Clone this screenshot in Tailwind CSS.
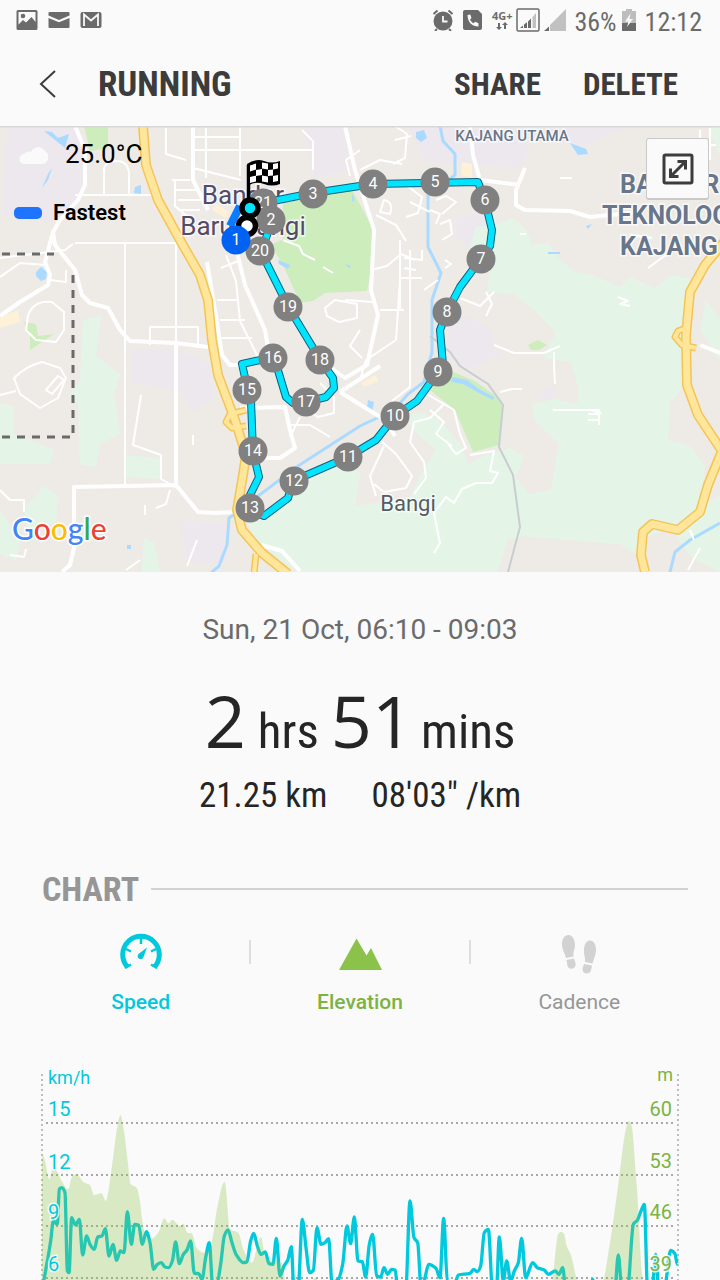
<!DOCTYPE html>
<html lang="en">
<head>
    <meta charset="UTF-8">
    <meta name="viewport" content="width=device-width, initial-scale=1.0">
    <title>Running - Workout details</title>
    <script src="https://cdn.jsdelivr.net/npm/@tailwindcss/browser@4"></script>
</head>
<body class="h-screen overflow-hidden flex flex-col bg-[#fafafa] font-[Roboto,sans-serif] text-[#252525]">
    <!-- Status bar -->
    <div class="h-10 shrink-0 pl-4 pr-[18px] flex items-center justify-between text-[#6b6b6b]">
        <div class="flex items-center gap-[10px]">
            <svg class="w-[22px] h-5" viewBox="0 0 22 20" fill="currentColor">
                <path fill-rule="evenodd" d="M2 0h18a1.500 1.500 0 0 1 1.500 1.500v17A1.500 1.500 0 0 1 20 20H2a1.500 1.500 0 0 1-1.500-1.500v-17A1.500 1.500 0 0 1 2 0zM2.500 2v12.500L7 10l3 2.500L15.500 7 19.500 12V2z"/>
                <circle cx="7" cy="6" r="2.300"/>
            </svg>
            <svg class="w-[22px] h-5" viewBox="0 0 22 20" fill="currentColor">
                <path d="M1.500 2h19a1 1 0 0 1 1 1v2.500L11 10 .5 5.500V3a1 1 0 0 1 1-1zM.5 8 11 12.300 21.500 8v9a1 1 0 0 1-1 1h-19a1 1 0 0 1-1-1z"/>
            </svg>
            <svg class="w-[22px] h-5" viewBox="0 0 22 20" fill="none">
                <rect x=".5" y="2" width="21" height="16" rx="2" fill="currentColor"/>
                <path d="M4 16V4.500l7 6 7-6V16" stroke="#fafafa" stroke-width="1.800"/>
            </svg>
        </div>
        <div class="flex items-center">
            <svg class="w-[22px] h-[22px]" viewBox="0 0 22 22">
                <circle cx="11" cy="12" r="9.500" fill="currentColor"/>
                <path d="M11 7v5.500h4.500" fill="none" stroke="#fafafa" stroke-width="1.800"/>
                <path d="M1.500 5 5.500 1.500M20.500 5l-4-3.500M5 20l-2 2M17 20l2 2" stroke="currentColor" stroke-width="2"/>
            </svg>
            <svg class="ml-[9px] w-5 h-[22px]" viewBox="0 0 20 22">
                <path d="M2 1h13l4 4v14a2 2 0 0 1-2 2H2a2 2 0 0 1-2-2V3a2 2 0 0 1 2-2z" fill="currentColor"/>
                <path d="M4.500 6c0 7 4.500 11.500 11 11.500v-3.200l-3.300-1.500-1.700 1.500C8.700 13.300 7.700 12 7 10.500l1.500-1.600L7.300 5.500z" fill="#fafafa"/>
            </svg>
            <div class="ml-[9px] flex flex-col items-center">
                <span class="font-[Open_Sans,sans-serif] text-[11px] leading-3 font-bold">4G+</span>
                <svg class="w-3 h-2" viewBox="0 0 12 8" fill="currentColor"><path d="M3 8 0 5h2V1h2v4h2zM9 0l3 3h-2v4H8V3H6z"/></svg>
            </div>
            <svg class="ml-1 w-6 h-6" viewBox="0 0 24 24" fill="currentColor">
                <rect x="1" y="1" width="22" height="22" rx="1.500" fill="none" stroke="currentColor" stroke-width="1.500"/>
                <path d="M4 20l3-2.500V20zM8 16.500l3-2.300V20H8zM12 13.500l3-3V20h-3z"/>
                <path d="M16.500 9 20 5v15h-3.500z" opacity=".4"/>
            </svg>
            <svg class="ml-1 w-[22px] h-[22px]" viewBox="0 0 22 22" fill="currentColor"><path d="M22 0v22H6V16z" opacity=".4"/><path d="M5 17.500V22H0z"/></svg>
            <span class="ml-2 pt-[3px] font-[Roboto_Condensed,Liberation_Sans_Narrow,Roboto,sans-serif] text-[26px] leading-8">36%</span>
            <svg class="ml-1 w-4 h-[22px]" viewBox="0 0 16 22">
                <path d="M5 0h6v2h4v20H1V2h4z" fill="#bdbdbd"/><path d="M1 14h14v8H1z" fill="currentColor"/>
                <path d="M9.500 4.500 4 12.500h3.500L6 18l6-8H8.500z" fill="#fafafa"/>
            </svg>
            <span class="ml-2 pt-[3px] font-[Roboto_Condensed,Liberation_Sans_Narrow,Roboto,sans-serif] text-[26px] leading-8">12:12</span>
        </div>
    </div>

    <!-- App bar -->
    <header class="h-[86px] shrink-0 pt-1 pl-8 pr-[42px] flex items-center font-[Roboto_Condensed,Liberation_Sans_Narrow,Roboto,sans-serif] font-bold text-[#3c3c3c]">
        <button type="button" aria-label="Back" class="w-8 h-8 flex items-center justify-center">
            <svg class="w-8 h-8" viewBox="0 0 32 32" fill="none" stroke="currentColor" stroke-width="2"><path d="M23 2 9 15l14 13"/></svg>
        </button>
        <h1 class="ml-[34px] text-[35px] leading-10">RUNNING</h1>
        <div class="ml-auto flex gap-[42px] text-[31px] leading-10">
            <button type="button">SHARE</button>
            <button type="button">DELETE</button>
        </div>
    </header>

    <!-- Route map -->
    <section class="relative shrink-0" aria-label="Route">
        <svg class="block w-full" viewBox="0 126 720 446" fill="none">
            <rect y="126" width="720" height="446" fill="#eeebe7"/>
            <!-- built-up areas -->
            <g fill="#ece8ee">
                <path d="M8 126h66l12 24v36l-30 36L2 214z"/>
                <path d="M300 126h42l8 44-36 8-4-26zM408 126h84l38 20-8 22-96-6z"/>
                <path d="M456 218l26-6 6 26-10 20-22-20zM448 310l40 16 12 30-34 14-18-12z"/>
                <path d="M130 350h50l30 14 4 34-20 14-14-20-48-10zM555 385l-3 20-18-10zM180 520l50 4-4 40-40-2zM500 126h130l-50 22z"/>
            </g>
            <!-- forest and farmland -->
            <g fill="#e4f5e8">
                <path d="M495 225l18-7 14 13 5 14 16-2 12 17 15 12 17 3 28 12 10-10 25 11 17-13 18 4 2 66-4 37-18 20-2 38 22 6 15 20-5 38-25 22-35 13v18l-20-13-100-8-12 38H300l-40-30-15-25 25-7 30-27 20-15 30-2 10 4-5 34 55-8 12-26 14-22-20-18-12-14 14-6 20 6 22 26 8 20 20-10 22-6 14 8-8 22 13 16 22-4 8-46-25-24-2-16 22-5 23 5 2-14-8-28-27-4 12-26-22-22-20-16-27-2 3-25-20-20 6-20z"/>
                <path d="M83 320l18-4-5 40 24 18-6 20 6 40-20 10-4 24-16-4-2-60-10-8 12-14zM126 455l34 4 2 20-36-2zM0 404l14 2v28l40 16-4 14-50 0zM24 508l20-22 14 10-2 26-30 8zM0 510l20 30-4 20-16-6zM144 538l10 4 6 30h-18z"/>
                <path d="M664 520l56-24v76l-28-14zM706 300l14 20v40l-20-30zM708 126h12v30z"/>
            </g>
            <path d="M551 545l-43-7-10 34h140v-14l-20-12z" fill="#eeebe7"/>
            <g fill="#cdedbd">
                <path d="M283 203l69-13 23 42-2 28-6 31-42 2-12 8-13 2-17-38-12-20 12-6z"/>
                <path d="M437 365l38 16 25 18 3 12-4 34-26 7-18-42-25-20zM84 126h24v22l-18 3zM24 322l12 2 2 12 16-2-12 8-12 8 0-14zM528 345l10-5 9 5-8 5h-8z"/>
            </g>
            <g fill="#fdf1d8"><path d="M216 204l14 8-4 6-14-8zM462 162l10 2 0 14-11-3zM0 318l18-8 2 12-20 6zM362 383l14-8 2 6-14 6z"/></g>
            <!-- water -->
            <g fill="#aadaff">
                <path d="M44 131l8 1 6 6 11-4-4 14-10-8zM52 168l-4 12-6 8 6-14zM36 272l5-5 6 5-1 7-5 2-5-5zM135 187l6-2v9l-7-1zM416 132l8-2 3 8-6 4-5-4zM570 143l16 6 2 5-10 1zM278 260l12 5-2 4-9-5zM345 264l6 2-2 2zM352 194l3 6-3 2zM453 377l14 3 12 9 15 8-1 3-14-7-16-9-12-2zM548 252h12v2h-12zM586 226l6-2-4 5zM368 400l6 2-2 10-5-4zM127 545h4v4h-4z"/>
            </g>
            <g stroke="#aadaff" stroke-width="3" stroke-linejoin="round">
                <path d="M440 126l3 15 12 13v21l-27 20v52l13 26-9 27v52l-8 30-16 12-14 16-34 16-62 40-49 37-20 15-2 27-8 21-8 7M720 523l-30 17-15 12-5 20"/>
            </g>
            <!-- minor roads -->
            <g stroke="#fff" stroke-width="2" stroke-linejoin="round">
                <path d="M75 195h80M75 243h101v100M125 243v244M104 195v-24q0-10 12-10t13 12v22M73 244l-8 6-65 8M0 277l20-14 26 2M50 280l16 2v-12M172 180h18M175 180v26l14 12M166 128v26l20 6M193 137h48M193 150h120M313 170v-30M193 168l48 12"/>
                <path d="M174 190h22M178 200h24M180 210h20M206 128l0 50M240 126v50M221 268l20-8M217 300h20M220 320h25M222 338h30M226 255l10 26 4 40 18 36M28 316q5-16 24-14l12 10v18l-8 12-20-2-10-10zM150 345v-18h48v20"/>
                <path d="M14 378q12-12 28-16l18 6 6 10-8 20-18 10-20-14zM46 390l12-14 6 4-12 14zM0 395l16-4M141 395l-8 50 28 10v24l18 10M193 435v10M0 490l10 10 14 0v12M145 505v10M170 490l-4 14-10 4M140 560l-14 10M197 540l-10 26M10 555l14 2 2-8"/>
                <path d="M395 126l12 8-2 24-12 6M395 140l16-4M360 150l-14 10 4 16M360 170l20-10 22 4M384 200q10 2 6 14l-10-2zM376 215l20 10 10 16M371 270l16-4 14-12 14 6M345 300l28 2M325 308l10-8 22 4v14l-18 4-12-6zM380 310h24M400 240v70M410 250v50M404 258l18 2v-10M400 278h22M404 268l12 2M360 330l-10 16 12 12"/>
                <path d="M406 185l16 12-4 16-12 4M410 202l20 10M436 200l10-4 10 6-14 12M430 210l10 4-4 10M440 224l10-4 2 14-10 6M445 260l6 4-6 4M410 287v100l-18 14M424 290l14-10M460 298l20 8 14-14M486 292l6 12-6 12"/>
                <path d="M302 130l10 10M310 360l14 8M300 405l18 12 16-4 0-16-14-14M290 425l20 0 20 12M300 417l-10 20M360 380l6-20 30-20 4-60"/>
                <path d="M420 390l24 14 10 6 6 24 6 14-10 6-8-10M430 410l14 12-8 12 16 12M444 404l-14 14-16 4-4 20 14 20 2 16-12 16M380 440l16 14 16 22-6 12-22 4-10-8M384 446l-14 30 6 20M470 455l24-4-4 20 8 2-6 10-16 0-14 6-8 14-8-6-12 16 6 30-6 10"/>
                <path d="M500 392l12-3h10M554 352v14l1 18M553 410h38l10 3M588 410h12M588 414h12M588 420h12M599 410v15M494 345l20 8 30 0 16-7M520 234l6 0M618 297l10 4-8 3M620 304l10 2M690 530l4 10M700 548l-12 22"/>
                <path d="M648 268l30-22M700 130v30M710 128v32M690 145h26M560 178h12M630 235l22 3"/>
            </g>
            <!-- main roads -->
            <g stroke="#fff" stroke-width="4" stroke-linejoin="round">
                <path d="M75 126l10 24v35l-7 15-18 20-7 12 2 13 20 25 7 25 8 8 18 5 12 22 10 11 46 2 32 4M53 232l-8 30 5 13-2 10-28 17-20 14M176 344v141l22 27 17 1 20-1M176 485l-102 2v61l-4 17-8 7M193 126v54l15 30M345 126l10 44 19 60-3 60 7 25-11 50-22 13-25-18M207 262l8 48 7 45 8 10h15M237 252l8 33 20 45 5 30M240 408l45-1 5 23 5 18-15 10h-18M340 392l45 28 10 16M340 392l40-26M470 126l3 29 7 25 40 5M525 168l-9 22v15l9 5 45 1 20 6 50-5M262 545l20 6 18 20M700 345l20 8"/>
            </g>
            <path d="M430 336l20 16 10 14 28 18 15 21-4 42 14 28 7 52-12 45" stroke="#c8cdd1" stroke-width="2"/>
            <path d="M283 240l16 6 4 8 12 6M323 267l10 6" stroke="#fff" stroke-width="2"/>
            <!-- highways -->
            <g stroke-linejoin="round">
                <g stroke="#f4c454" stroke-width="10">
                    <path d="M143 126l3 39 12 35 22 40 20 35 8 25 4 40 6 35 17 45 11 35-3 20-6 35 5 20 20 23 26 21"/>
                    <path d="M724 242l-19 23-15 27-4 43 1 50 11 30 24 36-14 34-8 27-22 18-26-6-9 8-2 23 4 17"/>
                    <path d="M254 574l2-20M0 126l2-6M246 410l-16 4-4 8 6 6 14-2M686 328l-8 3-3 6 7 8 14 3" stroke-width="7"/>
                </g>
                <path d="M254 574l2-20M246 410l-16 4-4 8 6 6 14-2M686 328l-8 3-3 6 7 8 14 3" stroke="#ffe69b" stroke-width="4"/>
                <g stroke="#ffe69b" stroke-width="7">
                    <path d="M143 126l3 39 12 35 22 40 20 35 8 25 4 40 6 35 17 45 11 35-3 20-6 35 5 20 20 23 26 21"/>
                    <path d="M724 242l-19 23-15 27-4 43 1 50 11 30 24 36-14 34-8 27-22 18-26-6-9 8-2 23 4 17"/>
                </g>
            </g>
            <path d="M2 254h52M73 275v162H0" stroke="#6a6a6a" stroke-width="3" stroke-dasharray="8 7"/>
            <path d="M0 126.500h720" stroke="#d5d8d8" stroke-width="2"/>

            <!-- place names -->
            <g font-family="Roboto, sans-serif" stroke="#fff" stroke-opacity=".7" stroke-width="3" paint-order="stroke" text-anchor="middle">
                <g font-size="26" fill="#544b68">
                    <text x="243" y="204">Bandar</text>
                    <text x="243" y="235">Baru Bangi</text>
                </g>
                <text x="408" y="511" font-size="22" fill="#555c63">Bangi</text>
                <text x="512" y="141" font-size="15" font-weight="500" fill="#67768a">KAJANG UTAMA</text>
                <g font-size="25" font-weight="700" fill="#67768a" text-anchor="start">
                    <text x="620" y="193">BANDAR</text>
                    <text x="602" y="224">TEKNOLOGI</text>
                    <text x="620" y="255">KAJANG</text>
                </g>
            </g>
            <text x="12" y="540" font-family="Lato, sans-serif" font-size="30" font-weight="500" stroke="#fff" stroke-width="3" paint-order="stroke"><tspan fill="#4285f4">G</tspan><tspan fill="#ea4335">o</tspan><tspan fill="#fbbc05">o</tspan><tspan fill="#4285f4">g</tspan><tspan fill="#34a853">l</tspan><tspan fill="#ea4335">e</tspan></text>

            <!-- route -->
            <g stroke-linejoin="round">
                <path d="M263 203l50-10 60-9 105-2 7 19 7 29-2 16-10 14-20 27-13 25-7 18 3 35-5 7-21 29-22 15-19 24-28 17-55 24-5 17-24 18-14-6v-15l9-18-6-25-2-51-3-10-6-27 32-7 12 40 7 6 13-1 20-5 8-9-1-10-12-17-32-53-28-56 11-31" stroke="#0b5f7c" stroke-width="8"/>
                <path d="M263 203l50-10 60-9 105-2 7 19 7 29-2 16-10 14-20 27-13 25-7 18 3 35-5 7-21 29-22 15-19 24-28 17-55 24-5 17-24 18-14-6v-15l9-18-6-25-2-51-3-10-6-27 32-7 12 40 7 6 13-1 20-5 8-9-1-10-12-17-32-53-28-56 11-31" stroke="#00e5ff" stroke-width="6"/>
                <path d="M240 206l-10 20" stroke="#0a7cff" stroke-width="8"/>
            </g>
            <g id="markers" font-family="Roboto, sans-serif" font-size="16" fill="#fff" text-anchor="middle"></g>
            <!-- start, finish and fastest km -->
            <circle cx="247" cy="226" r="8.500" fill="#fff" stroke="#000" stroke-width="5.500"/>
            <circle cx="250" cy="208" r="8" fill="#00e5ff" stroke="#000" stroke-width="5.500"/>
            <path d="M248.500 202v-37" stroke="#000" stroke-width="3.500"/>
            <path d="M247 164q9-6 17-3 8 3 16 0v23q-8 3-16 0-8-3-15 1z" fill="#000"/>
            <path d="M250 165.500l6-2v6l-6 2zM262 162.500l6 1v6l-6-1zM273 164l5-1v5.500l-5 1zM256 170l6-1v6l-6 1zM268 170l5-.5v6l-5 .5zM250 177l6-1.500v6l-6 1.500zM262 175.500l6 1v6l-6-1zM273 176l5-1v6l-5 1z" fill="#fff"/>
            <circle cx="236" cy="240" r="14.500" fill="#0061f2"/>
            <text x="236" y="245" font-family="Roboto, sans-serif" font-size="16" fill="#fff" text-anchor="middle">1</text>
        </svg>

        <div class="absolute top-3 left-4 flex items-center text-black">
            <svg class="w-8 h-8" viewBox="0 0 32 32"><path d="M9 26a5 5 0 0 1-1-10 6 6 0 0 1 7-2A8 8 0 0 1 29 13a7 7 0 0 1-3 13z" fill="#fafafa"/></svg>
            <span class="ml-[17px] text-[26px] leading-8">25.0°C</span>
        </div>
        <div class="absolute top-[73px] left-[14px] flex items-center text-black">
            <span class="w-7 h-3 rounded-[5px] bg-[#1f74ff]"></span>
            <span class="ml-[11px] text-[22px] leading-7 font-semibold">Fastest</span>
        </div>
        <button type="button" aria-label="Expand map" class="absolute top-3 right-[11px] w-[63px] h-[62px] rounded-[3px] border border-[#c9c9c9] border-b-2 bg-[#fafafa] text-[#3c3c3c] flex items-center justify-center">
            <svg class="w-8 h-8" viewBox="0 0 32 32" fill="none" stroke="currentColor" stroke-width="3">
                <rect x="2" y="2" width="28" height="28" rx="1.500"/>
                <path d="M9 23 23 9M15.500 8.500H23.500v8M8.500 15.500v8h8"/>
            </svg>
        </button>
    </section>

    <!-- Summary -->
    <section class="shrink-0 pt-10 flex flex-col items-center">
        <p class="text-[28px] leading-9 text-[#6b6b6b]">Sun, 21 Oct, 06:10 - 09:03</p>
        <p class="mt-8 flex items-baseline font-[Roboto_Condensed,Liberation_Sans_Narrow,Roboto,sans-serif] text-[49px] leading-[80px]">
            <span class="font-[Open_Sans,sans-serif] text-[72px] font-medium">2</span>
            <span class="ml-3">hrs</span>
            <span class="ml-3 font-[Open_Sans,sans-serif] text-[72px] font-medium">51</span>
            <span class="ml-2">mins</span>
        </p>
        <p class="mt-1 flex gap-11 font-[Roboto_Condensed,Liberation_Sans_Narrow,Roboto,sans-serif] text-[35px] leading-10">
            <span>21.25 km</span>
            <span>08'03" /km</span>
        </p>
    </section>

    <!-- Chart -->
    <section class="shrink-0 mt-[50px]">
        <div class="pl-[42px] pr-8 flex items-center gap-3">
            <h2 class="font-[Roboto_Condensed,Liberation_Sans_Narrow,Roboto,sans-serif] font-bold text-[34px] leading-[46px] text-[#969696]">CHART</h2>
            <div class="flex-1 h-[2px] bg-[#d2d2d2]"></div>
        </div>
        <div class="mt-5 px-8 flex text-[21px] leading-7">
            <button type="button" class="flex-1 flex flex-col items-center gap-3 font-medium text-[#00c9dd]">
                <svg class="w-11 h-11" viewBox="0 0 44 44" fill="none" stroke="currentColor">
                    <path d="M8.500 35A18.300 18.300 0 1 1 35.500 35" stroke-width="5"/>
                    <path d="M22 6v6M7 17l5 2.500M37 17l-5 2.500M6 36l6-3.500M38 36l-6-3.500" stroke-width="2.500"/>
                    <path d="M28 15.500 24.500 25a3 3 0 1 1-5-3z" fill="currentColor" stroke="none"/>
                </svg>
                Speed
            </button>
            <div class="mt-2 w-[2px] h-6 bg-[#dedede]"></div>
            <button type="button" class="flex-1 flex flex-col items-center gap-3 font-medium text-[#7cb342]">
                <svg class="w-11 h-11" viewBox="0 0 44 44" fill="#8bc34a"><path d="M1 38 18.500 6.500 28.500 23.500 33 16l11 22z"/></svg>
                Elevation
            </button>
            <div class="mt-2 w-[2px] h-6 bg-[#dedede]"></div>
            <button type="button" class="flex-1 flex flex-col items-center gap-3 text-[#969696]">
                <svg class="w-11 h-11" viewBox="0 0 44 44" fill="#d2d2d2">
                    <path d="M11.500 3c4 0 6.500 5 6.500 10 0 4-2 6-1.500 11.500L9 26C8 21 5 18 5 12c0-5 2.500-9 6.500-9zM9.500 28l7.500-1.500c1 3 2 5 1.500 7-1 4-6.500 4.500-8 .5-.5-2-.5-4-1-6z"/>
                    <path d="M33 8.500c4 0 6 4.500 6 9.500 0 5-2.500 9-3.500 13.500L28 30c.5-4.500-1.500-8-1-12 0-5 2-9.500 6-9.500zM27 32l8 1.500c-.5 2-.5 4-1.500 6-2 3.500-8 2-8-2 0-2 1-3.500 1.500-5.500z"/>
                </svg>
                Cadence
            </button>
        </div>
        <svg class="block mt-[45px] w-full" viewBox="0 0 720 220" fill="none">
            <g stroke="#a9a9a9" stroke-width="2" stroke-dasharray="2 3">
                <path d="M46 62h630M46 114h630M46 165h630M46 217h630"/>
                <path d="M42 13v207M678 13v207" stroke="#bdbdbd"/>
            </g>
            <path id="speed-line" transform="translate(30) scale(.33333)" stroke="#00c9dd" stroke-width="10" stroke-linejoin="round"/>
            <path id="elevation-area" transform="translate(30) scale(.33333)" fill="#8bc34a" fill-opacity=".3"/>
            <g font-family="Roboto, sans-serif" font-size="20" stroke="#fafafa" stroke-opacity=".85" stroke-width="3" paint-order="stroke">
                <g fill="#00c9dd">
                    <text x="48" y="23" font-size="18">km/h</text>
                    <text x="48" y="55">15</text>
                    <text x="48" y="108">12</text>
                    <text x="48" y="158">9</text>
                    <text x="48" y="210">6</text>
                </g>
                <g fill="#7cb342" text-anchor="end">
                    <text x="673" y="20" font-size="18">m</text>
                    <text x="672" y="55">60</text>
                    <text x="672" y="107">53</text>
                    <text x="672" y="158">46</text>
                    <text x="672" y="210">39</text>
                </g>
            </g>
        </svg>
    </section>

    <script>
        // kilometre markers: number, x, y
        const kms = [[21,263,203],[2,271,220],[3,313,194],[4,373,184],[5,435,182],[6,485,200],[7,481,259],[8,447,312],[9,438,372],[10,395,416],[11,348,457],[12,294,481],[13,250,508],[14,253,451],[15,247,390],[16,273,358],[17,306,402],[18,320,360],[19,288,307],[20,260,251]];
        document.getElementById('markers').innerHTML = kms.map(([n, x, y]) =>
            `<circle cx="${x}" cy="${y}" r="14.500" fill="#808080"/><text x="${x}" y="${y + 5}">${n}</text>`).join('');

        const speed = [36,670,52,600,62,540,70,480,82,490,88,385,95,380,105,395,112,630,117,635,125,470,136,492,148,475,158,582,170,525,180,550,193,565,203,528,216,525,226,503,237,585,249,550,260,598,271,570,282,575,292,452,304,550,314,490,326,492,337,550,349,512,360,545,371,625,382,610,394,605,405,618,416,620,427,600,437,543,448,608,460,580,471,567,482,540,493,637,506,638,516,655,527,590,538,545,548,672,560,670,572,610,583,525,594,507,606,545,618,580,640,605,651,602,662,540,671,517,682,555,693,580,706,573,717,608,729,610,739,532,750,645,762,615,773,598,784,557,792,690,804,690,817,475,828,560,839,635,850,628,861,500,873,550,885,545,896,533,906,665,925,655,938,610,951,495,962,548,973,468,984,600,997,602,1007,648,1018,550,
            1028,520,1040,645,1052,648,1062,620,1073,640,1085,625,1096,628,1103,690,1127,690,1140,420,1152,530,1163,545,1174,690,1185,650,1196,610,1218,622,1230,650,1241,472,1252,660,1275,665,1285,642,1320,637,1331,625,1342,632,1352,615,1363,515,1375,505,1388,690,1399,690,1408,528,1420,660,1430,600,1442,660,1453,630,1465,605,1475,532,1487,650,1508,605,1522,620,1543,627,1555,640,1576,630,1587,640,1598,620,1608,690,1678,690,1688,655,1698,690,1754,690,1765,582,1776,690,1792,690,1810,490,1822,478,1833,450,1843,430,1853,690,1866,690,1877,580,1887,690,1902,690,1922,568,1935,578,1942,610];
        const elevation = [36,280,45,300,58,355,68,325,80,330,95,360,115,385,127,345,140,340,160,363,180,372,192,402,215,397,227,420,248,300,260,210,271,162,282,210,293,300,302,370,320,380,330,420,337,480,345,515,360,535,385,515,403,472,415,487,427,476,450,495,460,488,472,515,485,517,500,560,520,575,535,572,548,530,560,450,584,362,600,505,625,515,640,565,665,605,693,528,706,590,720,598,755,605,768,670,840,670,855,650,875,670,1563,670,1585,518,1593,513,1602,518,1610,555,1622,580,1648,670,1714,670,1740,545,1765,370,1790,195,1798,180,1805,195,1820,370,1841,670];

        // smooth curve through all points, flat at each peak and dip
        function curve(v) {
            const n = v.length / 2, x = i => v[2 * i], y = i => v[2 * i + 1];
            const slope = i => {
                if (i === 0 || i === n - 1) return 0;
                const a = (y(i) - y(i - 1)) / (x(i) - x(i - 1)), b = (y(i + 1) - y(i)) / (x(i + 1) - x(i));
                return a * b <= 0 ? 0 : 2 * a * b / (a + b);
            };
            let d = `M${x(0)} ${y(0)}`;
            for (let i = 1; i < n; i++) {
                const h = (x(i) - x(i - 1)) / 3;
                d += `C${x(i - 1) + h} ${y(i - 1) + slope(i - 1) * h} ${x(i) - h} ${y(i) - slope(i) * h} ${x(i)} ${y(i)}`;
            }
            return d;
        }
        document.getElementById('speed-line').setAttribute('d', curve(speed));
        document.getElementById('elevation-area').setAttribute('d', curve(elevation) + 'L36 670Z');
    </script>
</body>
</html>
